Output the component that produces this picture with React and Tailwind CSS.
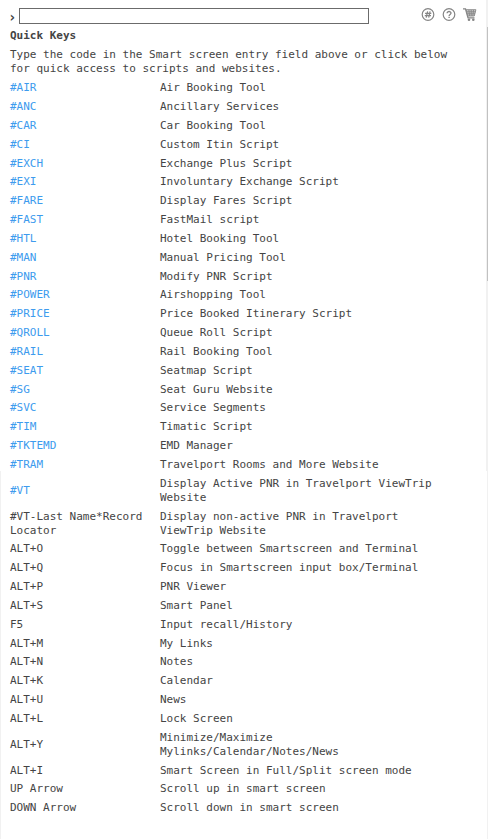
import React, { useState } from "react";

const quickKeys = [
  { code: "#AIR", label: "Air Booking Tool", link: true },
  { code: "#ANC", label: "Ancillary Services", link: true },
  { code: "#CAR", label: "Car Booking Tool", link: true },
  { code: "#CI", label: "Custom Itin Script", link: true },
  { code: "#EXCH", label: "Exchange Plus Script", link: true },
  { code: "#EXI", label: "Involuntary Exchange Script", link: true },
  { code: "#FARE", label: "Display Fares Script", link: true },
  { code: "#FAST", label: "FastMail script", link: true },
  { code: "#HTL", label: "Hotel Booking Tool", link: true },
  { code: "#MAN", label: "Manual Pricing Tool", link: true },
  { code: "#PNR", label: "Modify PNR Script", link: true },
  { code: "#POWER", label: "Airshopping Tool", link: true },
  { code: "#PRICE", label: "Price Booked Itinerary Script", link: true },
  { code: "#QROLL", label: "Queue Roll Script", link: true },
  { code: "#RAIL", label: "Rail Booking Tool", link: true },
  { code: "#SEAT", label: "Seatmap Script", link: true },
  { code: "#SG", label: "Seat Guru Website", link: true },
  { code: "#SVC", label: "Service Segments", link: true },
  { code: "#TIM", label: "Timatic Script", link: true },
  { code: "#TKTEMD", label: "EMD Manager", link: true },
  { code: "#TRAM", label: "Travelport Rooms and More Website", link: true },
  { code: "#VT", label: "Display Active PNR in Travelport ViewTrip Website", link: true, tall: true },
  { code: "#VT-Last Name*Record Locator", label: "Display non-active PNR in Travelport ViewTrip Website", tall: true },
  { code: "ALT+O", label: "Toggle between Smartscreen and Terminal" },
  { code: "ALT+Q", label: "Focus in Smartscreen input box/Terminal" },
  { code: "ALT+P", label: "PNR Viewer" },
  { code: "ALT+S", label: "Smart Panel" },
  { code: "F5", label: "Input recall/History" },
  { code: "ALT+M", label: "My Links" },
  { code: "ALT+N", label: "Notes" },
  { code: "ALT+K", label: "Calendar" },
  { code: "ALT+U", label: "News" },
  { code: "ALT+L", label: "Lock Screen" },
  { code: "ALT+Y", label: "Minimize/Maximize Mylinks/Calendar/Notes/News", tall: true },
  { code: "ALT+I", label: "Smart Screen in Full/Split screen mode" },
  { code: "UP Arrow", label: "Scroll up in smart screen" },
  { code: "DOWN Arrow", label: "Scroll down in smart screen" },
];

const HashIcon = () => (
  <svg viewBox="0 0 14 14" className="size-3.5" fill="none" stroke="#858585">
    <circle cx="7" cy="6.5" r="5.8" strokeWidth="1.2" />
    <path d="M6.6 3.4 5.2 9.6M9.1 3.4 7.7 9.6M4.1 5.3H10.3M3.8 7.7H10" strokeWidth="1.2" />
  </svg>
);

const HelpIcon = () => (
  <svg viewBox="0 0 14 14" className="size-3.5" fill="none" stroke="#858585">
    <circle cx="7" cy="6.5" r="5.8" strokeWidth="1.2" />
    <path d="M5.1 5.2C5.1 2.9 9 3 9 5.1 9 6.5 7.1 6.4 7.1 7.9" strokeWidth="1.3" />
    <path d="M7.1 8.8V10.1" strokeWidth="1.4" />
  </svg>
);

const CartIcon = () => (
  <svg viewBox="0 0 14 14" className="size-3.5" fill="none" stroke="#858585">
    <path d="M0 0.9H2.5L5 9.8H11.5" strokeWidth="1.3" />
    <path d="M3.2 1.7H12.9L11.3 8H4.8Z" fill="#d0d0d0" strokeWidth="0.9" />
    <path d="M3.8 3.8H12.4M4.3 5.8H12M5.9 2 6.5 8M8.2 2V8M10.5 2 9.8 8" strokeWidth="0.9" />
    <circle cx="6" cy="11.8" r="1.3" fill="#858585" stroke="none" />
    <circle cx="10.3" cy="11.8" r="1.3" fill="#858585" stroke="none" />
  </svg>
);

const App = () => {
  const [entry, setEntry] = useState("");

  return (
    <div className="relative min-h-screen bg-white font-['DejaVu_Sans_Mono',monospace] text-[11px] leading-[14px] text-[#444444]">
      <header className="flex items-start pt-2 pr-[11px] pl-2">
        <label htmlFor="entry" className="w-[11px] pt-0.5 text-sm leading-[14px] font-bold">
          ›
        </label>
        <input
          id="entry"
          type="text"
          aria-label="Smart screen entry"
          value={entry}
          onChange={(e) => setEntry(e.target.value)}
          className="h-4 min-w-0 flex-1 border border-[#6b6b6b] bg-white px-1 outline-none"
        />
        <div className="ml-[52px] flex gap-[7px]">
          <button type="button" aria-label="Quick keys">
            <HashIcon />
          </button>
          <button type="button" aria-label="Help">
            <HelpIcon />
          </button>
          <button type="button" aria-label="Cart">
            <CartIcon />
          </button>
        </div>
      </header>

      <main className="pt-[5px] pr-9 pb-4 pl-2.5">
        <h1 className="font-bold">Quick Keys</h1>
        <p className="mt-[5px]">
          Type the code in the Smart screen entry field above or click below
          for quick access to scripts and websites.
        </p>
        <table className="mt-0.5 w-full table-fixed border-collapse text-left">
          <colgroup>
            <col className="w-[150px]" />
            <col />
          </colgroup>
          <tbody>
            {quickKeys.map((item) => (
              <tr
                key={item.code}
                className={item.tall ? "h-[33px]" : "h-[19px] nth-[6n]:h-[18px]"}
              >
                <td className="py-0.5 pr-3 align-middle">
                  {item.link ? (
                    <a href={item.code} className="text-[#3d9bee] hover:underline">
                      {item.code}
                    </a>
                  ) : (
                    item.code
                  )}
                </td>
                <td className="py-0.5 align-middle">{item.label}</td>
              </tr>
            ))}
          </tbody>
        </table>
      </main>

      {/* panel edges and scrollbar */}
      <div className="absolute top-0 right-0 h-[471px] w-0.5 bg-[#f1f1f1]" />
      <div className="absolute top-[27px] right-0 h-[254px] w-px bg-[#c1c1c1]" />
      <div className="absolute top-[471px] right-0 bottom-0 w-px bg-[#f1f1f1]" />
      <div className="absolute top-[471px] bottom-0 left-0 w-px bg-[#f1f1f1]" />
    </div>
  );
};

export default App;
